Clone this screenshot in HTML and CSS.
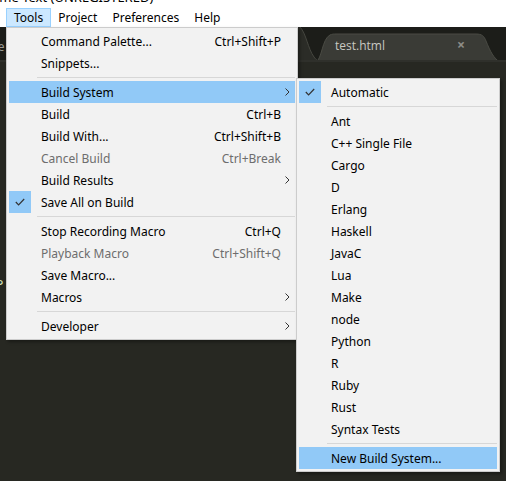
FILE: index.html
```html
<!DOCTYPE html>
<html>
<head>
<meta charset="utf-8">
<link rel="stylesheet" href="styles.css">
</head>
<body>
<div class="window">
  <div class="title"><span>ime Text (UNREGISTERED)</span></div>
  <div class="menubar">
    <div class="mb-item active">Tools</div>
    <div class="mb-item">Project</div>
    <div class="mb-item">Preferences</div>
    <div class="mb-item">Help</div>
  </div>
  <div class="editor">
    <div class="tabbar">
      <svg class="tabs" width="506" height="35" viewBox="0 0 506 35">
        <path d="M290 0 L300 0 C306 6 308 22 314 30 C316 33 318 34 320 35 L290 35 Z" fill="#2b2c27"/>
        <path d="M300 0 C306 6 308 22 314 30 C316 33 318 34 320 35" fill="none" stroke="#45463f" stroke-width="1"/>
        <path d="M316 35 C322 32 322 12 330 8 C332 7 334 7 336 7 L476 7 C482 7 484 9 486 14 C490 24 494 32 500 35 Z" fill="#3a3b36" stroke="#4a4b44" stroke-width="1"/>
        <rect x="0" y="33" width="506" height="2" fill="#2f302b"/>
      </svg>
      <span class="tab-label">test.html</span>
      <span class="tab-close">×</span>
      <span class="frag-a">re</span>
    </div>
    <div class="code"><span class="frag-p">P</span></div>

    <div class="menu tools">
      <div class="row"><span class="ck"></span><span class="lbl">Command Palette...</span><span class="sc">Ctrl+Shift+P</span><span class="ar"></span></div>
      <div class="row"><span class="ck"></span><span class="lbl">Snippets...</span><span class="sc"></span><span class="ar"></span></div>
      <div class="sep"></div>
      <div class="row hl"><span class="ck"></span><span class="lbl">Build System</span><span class="sc"></span><span class="ar"><svg width="5" height="8" viewBox="0 0 5 8"><path d="M0.5 0.5 L4 4 L0.5 7.5" fill="none" stroke="#333" stroke-width="1"/></svg></span></div>
      <div class="row"><span class="ck"></span><span class="lbl">Build</span><span class="sc">Ctrl+B</span><span class="ar"></span></div>
      <div class="row"><span class="ck"></span><span class="lbl">Build With...</span><span class="sc">Ctrl+Shift+B</span><span class="ar"></span></div>
      <div class="row dis"><span class="ck"></span><span class="lbl">Cancel Build</span><span class="sc">Ctrl+Break</span><span class="ar"></span></div>
      <div class="row"><span class="ck"></span><span class="lbl">Build Results</span><span class="sc"></span><span class="ar"><svg width="5" height="8" viewBox="0 0 5 8"><path d="M0.5 0.5 L4 4 L0.5 7.5" fill="none" stroke="#333" stroke-width="1"/></svg></span></div>
      <div class="row"><span class="ck on"><svg width="10" height="8" viewBox="0 0 10 8"><path d="M0.8 4 L3.6 6.8 L9.2 1" fill="none" stroke="#333" stroke-width="1.2"/></svg></span><span class="lbl">Save All on Build</span><span class="sc"></span><span class="ar"></span></div>
      <div class="sep"></div>
      <div class="row"><span class="ck"></span><span class="lbl">Stop Recording Macro</span><span class="sc">Ctrl+Q</span><span class="ar"></span></div>
      <div class="row dis"><span class="ck"></span><span class="lbl">Playback Macro</span><span class="sc">Ctrl+Shift+Q</span><span class="ar"></span></div>
      <div class="row"><span class="ck"></span><span class="lbl">Save Macro...</span><span class="sc"></span><span class="ar"></span></div>
      <div class="row"><span class="ck"></span><span class="lbl">Macros</span><span class="sc"></span><span class="ar"><svg width="5" height="8" viewBox="0 0 5 8"><path d="M0.5 0.5 L4 4 L0.5 7.5" fill="none" stroke="#333" stroke-width="1"/></svg></span></div>
      <div class="sep"></div>
      <div class="row"><span class="ck"></span><span class="lbl">Developer</span><span class="sc"></span><span class="ar"><svg width="5" height="8" viewBox="0 0 5 8"><path d="M0.5 0.5 L4 4 L0.5 7.5" fill="none" stroke="#333" stroke-width="1"/></svg></span></div>
    </div>

    <div class="menu sub">
      <div class="row"><span class="ck on"><svg width="10" height="8" viewBox="0 0 10 8"><path d="M0.8 4 L3.6 6.8 L9.2 1" fill="none" stroke="#333" stroke-width="1.2"/></svg></span><span class="lbl">Automatic</span></div>
      <div class="sep"></div>
      <div class="row"><span class="ck"></span><span class="lbl">Ant</span></div>
      <div class="row"><span class="ck"></span><span class="lbl">C++ Single File</span></div>
      <div class="row"><span class="ck"></span><span class="lbl">Cargo</span></div>
      <div class="row"><span class="ck"></span><span class="lbl">D</span></div>
      <div class="row"><span class="ck"></span><span class="lbl">Erlang</span></div>
      <div class="row"><span class="ck"></span><span class="lbl">Haskell</span></div>
      <div class="row"><span class="ck"></span><span class="lbl">JavaC</span></div>
      <div class="row"><span class="ck"></span><span class="lbl">Lua</span></div>
      <div class="row"><span class="ck"></span><span class="lbl">Make</span></div>
      <div class="row"><span class="ck"></span><span class="lbl">node</span></div>
      <div class="row"><span class="ck"></span><span class="lbl">Python</span></div>
      <div class="row"><span class="ck"></span><span class="lbl">R</span></div>
      <div class="row"><span class="ck"></span><span class="lbl">Ruby</span></div>
      <div class="row"><span class="ck"></span><span class="lbl">Rust</span></div>
      <div class="row"><span class="ck"></span><span class="lbl">Syntax Tests</span></div>
      <div class="sep"></div>
      <div class="row hl"><span class="ck"></span><span class="lbl">New Build System...</span></div>
    </div>
  </div>
</div>
</body>
</html>
```

FILE: styles.css
```css
* { box-sizing: border-box; }
html, body { margin: 0; padding: 0; }
body {
  width: 506px;
  height: 481px;
  overflow: hidden;
  background: #ffffff;
  font-family: "Noto Sans", "Liberation Sans", sans-serif;
  font-size: 12px;
  color: #000;
}
.window {
  width: 506px;
  height: 481px;
  display: flex;
  flex-direction: column;
}
.title {
  height: 8px;
  overflow: hidden;
  padding-left: 0;
}
.title span {
  display: block;
  margin-top: -11px;
  margin-left: -4px;
  font-size: 13px;
  line-height: 16px;
  color: #000;
}
.menubar {
  height: 19px;
  display: flex;
  padding-left: 6px;
  background: #fff;
}
.mb-item {
  height: 19px;
  line-height: 17px;
  padding: 0 7px 0 7px;
  border: 1px solid transparent;
}
.mb-item + .mb-item { padding-left: 6px; }
.mb-item.active {
  background: #cce8ff;
  border-color: #99d1ff;
}
.editor {
  flex: 1;
  position: relative;
  background: #272822;
  display: flex;
  flex-direction: column;
}
.tabbar {
  height: 35px;
  background: #1c1d19;
  position: relative;
}
.tabs { display: block; }
.tab-label {
  position: absolute;
  left: 335px;
  top: 10px;
  font-family: "Open Sans", "Noto Sans", sans-serif;
  font-size: 12px;
  color: #c9c9c2;
}
.tab-close {
  position: absolute;
  left: 457px;
  top: 8px;
  font-size: 14px;
  font-weight: bold;
  color: #8d8d87;
}
.frag-a {
  position: absolute;
  left: -7px;
  top: 11px;
  color: #9a9a94;
  font-size: 12px;
}
.code { flex: 1; position: relative; }
.frag-p {
  position: absolute;
  left: -4px;
  top: 214px;
  color: #d8e8c0;
  font-size: 12px;
}
.menu {
  position: absolute;
  background: #f2f2f2;
  border: 1px solid #cccccc;
  padding: 2px;
  box-shadow: 2px 2px 3px rgba(0,0,0,0.35);
}
.menu.tools {
  left: 6px;
  top: 0px;
  width: 292px;
}
.menu.sub {
  left: 296px;
  top: 51px;
  width: 204px;
}
.row {
  height: 22px;
  display: flex;
  align-items: center;
}
.ck {
  width: 22px;
  height: 22px;
  display: flex;
  align-items: center;
  justify-content: center;
  flex: none;
}
.ck.on { background: #91c9f7; }
.lbl {
  margin-left: 10px;
  flex: 1;
  white-space: nowrap;
}
.sc {
  white-space: nowrap;
  text-align: right;
}
.ar {
  width: 14px;
  flex: none;
  display: flex;
  justify-content: flex-end;
  padding-right: 5px;
}
.row.hl { background: #91c9f7; }
.row.dis { color: #6d6d6d; }
.sep {
  height: 7px;
  margin-left: 28px;
  position: relative;
}
.sep::after {
  content: "";
  position: absolute;
  left: 0;
  right: 0;
  top: 3px;
  height: 1px;
  background: #d7d7d7;
}
```
